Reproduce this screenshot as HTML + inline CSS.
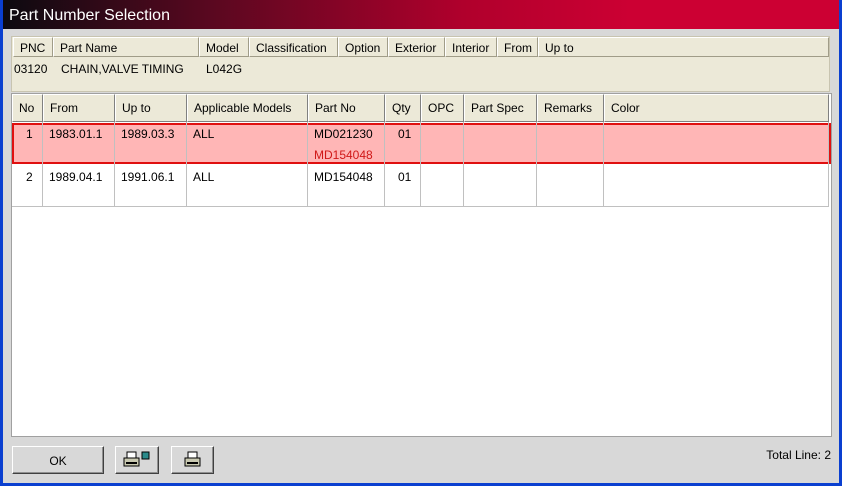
<!DOCTYPE html>
<html><head><style>
*{margin:0;padding:0;box-sizing:border-box}
body{width:842px;height:486px;overflow:hidden;background:#0a3fd0;font-family:"Liberation Sans",sans-serif;font-size:12px;color:#000;position:relative}
.win{position:absolute;left:3px;top:0;width:836px;height:483px;background:#d8d8d8}
.title{position:absolute;left:0;top:0;width:836px;height:29px;background:linear-gradient(to right,#0c0a10 0%,#5a0820 25%,#b0002c 55%,#cc0033 75%,#cc0033 100%);color:#fff;font-size:16px;padding:7px 0 0 6px}
.abs{position:absolute}
.info{left:8px;top:36px;width:819px;height:56px;background:#ece9d8;border:1px solid #c8c4b0}
.hd{position:absolute;top:0;height:20px;border:1px solid;border-color:#fff #a09c88 #a09c88 #fff;background:#ece9d8;padding:3px 0 0 6px;white-space:nowrap}
.grid{left:8px;top:93px;width:821px;height:344px;background:#fff;border:1px solid #a0a0a0}
.gh{position:absolute;top:0;height:28px;border:1px solid;border-color:#fff #808080 #808080 #fff;background:#ece9d8;padding:6px 0 0 6px;white-space:nowrap}
.vl{position:absolute;top:28px;height:84px;width:1px;background:#c0c0c0}
.t{position:absolute;white-space:nowrap}
.btn{position:absolute;top:446px;height:28px;background:#d8d8d8;border:1px solid;border-color:#fff #404040 #404040 #fff;box-shadow:inset -1px -1px 0 #909090}
</style></head><body>
<div class="win">
<div class="title">Part Number Selection</div>
<div class="abs info">
<div class="hd" style="left:1px;width:40px">PNC</div>
<div class="hd" style="left:41px;width:146px">Part Name</div>
<div class="hd" style="left:187px;width:50px">Model</div>
<div class="hd" style="left:237px;width:89px">Classification</div>
<div class="hd" style="left:326px;width:50px">Option</div>
<div class="hd" style="left:376px;width:57px">Exterior</div>
<div class="hd" style="left:433px;width:52px">Interior</div>
<div class="hd" style="left:485px;width:41px">From</div>
<div class="hd" style="left:526px;width:291px">Up to</div>
<div class="t" style="left:2px;top:25px">03120</div>
<div class="t" style="left:49px;top:25px">CHAIN,VALVE TIMING</div>
<div class="t" style="left:194px;top:25px">L042G</div>
</div>
<div class="abs grid">
<div class="gh" style="left:0;width:31px">No</div>
<div class="gh" style="left:31px;width:72px">From</div>
<div class="gh" style="left:103px;width:72px">Up to</div>
<div class="gh" style="left:175px;width:121px">Applicable Models</div>
<div class="gh" style="left:296px;width:77px">Part No</div>
<div class="gh" style="left:373px;width:36px">Qty</div>
<div class="gh" style="left:409px;width:43px">OPC</div>
<div class="gh" style="left:452px;width:73px">Part Spec</div>
<div class="gh" style="left:525px;width:67px">Remarks</div>
<div class="gh" style="left:592px;width:225px">Color</div>
<div class="abs" style="left:0;top:29px;width:819px;height:41px;background:#ffb6b6;border:2px solid #e01010"></div>
<div class="vl" style="left:30px"></div><div class="vl" style="left:102px"></div><div class="vl" style="left:174px"></div><div class="vl" style="left:295px"></div><div class="vl" style="left:372px"></div><div class="vl" style="left:408px"></div><div class="vl" style="left:451px"></div><div class="vl" style="left:524px"></div><div class="vl" style="left:591px"></div><div class="vl" style="left:816px"></div>
<div class="abs" style="left:0;top:112px;width:817px;height:1px;background:#c0c0c0"></div>
<div class="t" style="left:14px;top:33px">1</div>
<div class="t" style="left:37px;top:33px">1983.01.1</div>
<div class="t" style="left:109px;top:33px">1989.03.3</div>
<div class="t" style="left:181px;top:33px">ALL</div>
<div class="t" style="left:302px;top:33px">MD021230</div>
<div class="t" style="left:302px;top:54px;color:#d01818">MD154048</div>
<div class="t" style="left:386px;top:33px">01</div>
<div class="t" style="left:14px;top:76px">2</div>
<div class="t" style="left:37px;top:76px">1989.04.1</div>
<div class="t" style="left:109px;top:76px">1991.06.1</div>
<div class="t" style="left:181px;top:76px">ALL</div>
<div class="t" style="left:302px;top:76px">MD154048</div>
<div class="t" style="left:386px;top:76px">01</div>
</div>
<div class="btn" style="left:9px;width:92px;text-align:center;padding-top:7px">OK</div>
<div class="btn" style="left:112px;width:44px"><svg width="42" height="26"><g transform="translate(8,5)"><rect x="3" y="0" width="9" height="6" fill="#fff" stroke="#000"/><rect x="0" y="6" width="15" height="8" fill="#c8c8b0" stroke="#000"/><rect x="2" y="10" width="11" height="2" fill="#000"/></g><rect x="26" y="5" width="7" height="7" fill="#2a8a8a" stroke="#000"/></svg></div>
<div class="btn" style="left:168px;width:43px"><svg width="41" height="26"><g transform="translate(13,5)"><rect x="3" y="0" width="9" height="6" fill="#fff" stroke="#000"/><rect x="0" y="6" width="15" height="8" fill="#c8c8b0" stroke="#000"/><rect x="2" y="10" width="11" height="2" fill="#000"/></g></svg></div>
<div class="t" style="right:8px;top:448px">Total Line: 2</div>
</div>
</body></html>
